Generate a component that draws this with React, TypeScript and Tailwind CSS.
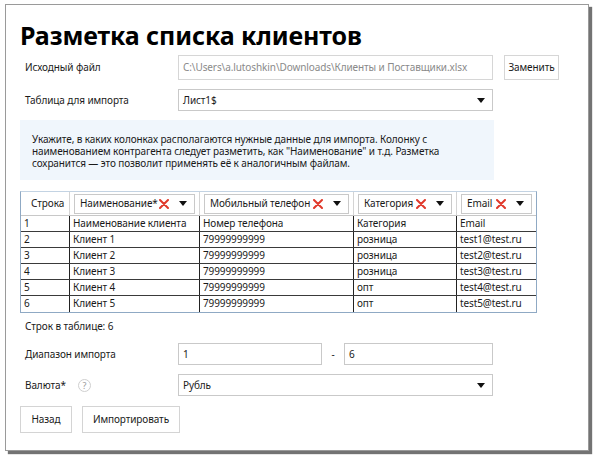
import React from "react";

const Arrow = () => (
  <svg width="8" height="5" viewBox="0 0 8 5" className="shrink-0">
    <path d="M0 0H8L4 5Z" fill="#111" />
  </svg>
);

const RedX = () => (
  <svg width="10" height="10" viewBox="0 0 10 10" className="shrink-0">
    <path d="M1 1L9 9M9 1L1 9" stroke="#e0392b" strokeWidth="2" strokeLinecap="round" />
  </svg>
);

function ColSelect({ label }: { label: string }) {
  return (
    <div className="flex-1 min-w-0 h-[20px] border border-[#c9c9c9] bg-white flex items-center pl-[5px] pr-[7px] mx-[4px]">
      <span className="flex-1 min-w-0 whitespace-nowrap overflow-hidden">{label}</span>
      <RedX />
      <span className="ml-[10px] flex"><Arrow /></span>
    </div>
  );
}

const rows = [
  ["1", "Наименование клиента", "Номер телефона", "Категория", "Email"],
  ["2", "Клиент 1", "79999999999", "розница", "test1@test.ru"],
  ["3", "Клиент 2", "79999999999", "розница", "test2@test.ru"],
  ["4", "Клиент 3", "79999999999", "розница", "test3@test.ru"],
  ["5", "Клиент 4", "79999999999", "опт", "test4@test.ru"],
  ["6", "Клиент 5", "79999999999", "опт", "test5@test.ru"],
];

export default function App() {
  return (
    <div
      className="w-[595px] h-[459px] bg-white pt-[4px] pl-[5px] text-[10px] tracking-[-0.1px] text-[#1a1a1a]"
      style={{ fontFamily: '"Noto Sans", "DejaVu Sans", sans-serif' }}
    >
      <div className="w-[584px] h-[447px] border border-[#9a9a9a] bg-white shadow-[3px_3px_1px_rgba(0,0,0,0.55)] pt-[15px] pl-[14px]">
        <h1 className="text-[25px] leading-[30px] font-bold text-black tracking-[-0.1px]">
          Разметка списка клиентов
        </h1>

        {/* Source file */}
        <div className="flex items-center mt-[5px] h-[25px]">
          <div className="w-[158px] pl-[5px]">Исходный файл</div>
          <div className="w-[315px] h-[25px] border border-[#d6d6d6] flex items-center pl-[4px] text-[#8a8a8a] whitespace-nowrap overflow-hidden">
            C:\Users\a.lutoshkin\Downloads\Клиенты и Поставщики.xlsx
          </div>
          <button className="ml-[11px] w-[55px] h-[25px] border border-[#d6d6d6] bg-white flex items-center justify-center">
            Заменить
          </button>
        </div>

        {/* Table for import */}
        <div className="flex items-center mt-[9px] h-[22px]">
          <div className="w-[158px] pl-[5px]">Таблица для импорта</div>
          <div className="w-[315px] h-[22px] border border-[#c9c9c9] flex items-center pl-[4px] pr-[7px]">
            <span className="flex-1">Лист1$</span>
            <Arrow />
          </div>
        </div>

        {/* Info box */}
        <div className="mt-[9px] w-[474px] h-[60px] bg-[#f0f6fc] pl-[12px] pr-[20px] pt-[13px] leading-[12px]">
          Укажите, в каких колонках располагаются нужные данные для импорта. Колонку с наименованием контрагента следует разметить, как "Наименование" и т.д. Разметка сохранится — это позволит применять её к аналогичным файлам.
        </div>

        {/* Table */}
        <div className="mt-[11px] w-[517px] border border-[#8fa9c4] border-t-[#c3d3e3]">
          <div className="grid grid-cols-[49px_130px_154px_103px_79px] h-[24px] items-center border-b border-[#c8c8c8]">
            <div className="pl-[10px] h-full flex items-center border-r border-[#d4d4d4]">Строка</div>
            <div className="h-full flex items-center border-r border-[#d4d4d4]"><ColSelect label="Наименование*" /></div>
            <div className="h-full flex items-center border-r border-[#d4d4d4]"><ColSelect label="Мобильный телефон" /></div>
            <div className="h-full flex items-center border-r border-[#d4d4d4]"><ColSelect label="Категория" /></div>
            <div className="h-full flex items-center"><ColSelect label="Email" /></div>
          </div>
          {rows.map((r, i) => (
            <div
              key={i}
              className={
                "grid grid-cols-[49px_130px_154px_103px_79px] h-[16px] leading-[15px] " +
                (i < rows.length - 1 ? "border-b border-[#3a3a3a]" : "")
              }
            >
              {r.map((c, j) => (
                <div
                  key={j}
                  className={
                    "pl-[3px] whitespace-nowrap overflow-hidden " +
                    (j < 4 ? "border-r border-[#222]" : "")
                  }
                >
                  {c}
                </div>
              ))}
            </div>
          ))}
        </div>

        <div className="mt-[6px] pl-[5px] h-[14px] leading-[14px]">Строк в таблице: 6</div>

        {/* Range */}
        <div className="flex items-center mt-[10px] h-[22px]">
          <div className="w-[158px] pl-[5px]">Диапазон импорта</div>
          <div className="w-[144px] h-[22px] border border-[#c9c9c9] flex items-center pl-[4px]">1</div>
          <div className="w-[22px] text-center">-</div>
          <div className="w-[149px] h-[22px] border border-[#c9c9c9] flex items-center pl-[4px]">6</div>
        </div>

        {/* Currency */}
        <div className="flex items-center mt-[9px] h-[22px]">
          <div className="w-[158px] pl-[5px] flex items-center">
            <span>Валюта*</span>
            <span className="ml-[12px] w-[13px] h-[13px] rounded-full border border-[#cfcfcf] text-[#9a9a9a] text-[9px] leading-none flex items-center justify-center">?</span>
          </div>
          <div className="w-[315px] h-[22px] border border-[#c9c9c9] flex items-center pl-[4px] pr-[7px]">
            <span className="flex-1">Рубль</span>
            <Arrow />
          </div>
        </div>

        {/* Buttons */}
        <div className="flex items-center mt-[10px] gap-[10px]">
          <button className="w-[52px] h-[27px] border border-[#d4d4d4] bg-white">Назад</button>
          <button className="w-[98px] h-[27px] border border-[#d4d4d4] bg-white">Импортировать</button>
        </div>
      </div>
    </div>
  );
}
